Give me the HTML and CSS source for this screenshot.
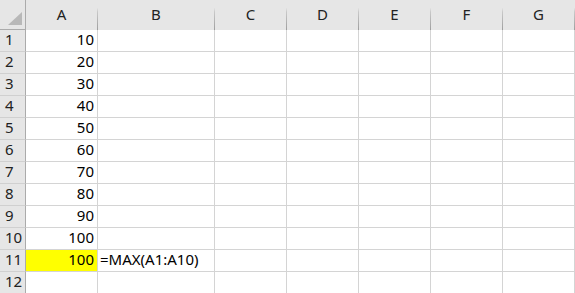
FILE: index.html
```html
<!DOCTYPE html>
<html lang="en">
<head>
    <meta charset="UTF-8">
    <title>Sheet</title>
    <link rel="stylesheet" href="styles.css">
</head>
<body>
    <div class="sheet">
        <div class="corner"><span class="corner-mark"></span></div>
        <div class="col-head">A</div>
        <div class="col-head">B</div>
        <div class="col-head">C</div>
        <div class="col-head">D</div>
        <div class="col-head">E</div>
        <div class="col-head">F</div>
        <div class="col-head">G</div>

        <div class="row-head">1</div><div class="cell num">10</div><div class="cell"></div><div class="cell"></div><div class="cell"></div><div class="cell"></div><div class="cell"></div><div class="cell"></div>
        <div class="row-head">2</div><div class="cell num">20</div><div class="cell"></div><div class="cell"></div><div class="cell"></div><div class="cell"></div><div class="cell"></div><div class="cell"></div>
        <div class="row-head">3</div><div class="cell num">30</div><div class="cell"></div><div class="cell"></div><div class="cell"></div><div class="cell"></div><div class="cell"></div><div class="cell"></div>
        <div class="row-head">4</div><div class="cell num">40</div><div class="cell"></div><div class="cell"></div><div class="cell"></div><div class="cell"></div><div class="cell"></div><div class="cell"></div>
        <div class="row-head">5</div><div class="cell num">50</div><div class="cell"></div><div class="cell"></div><div class="cell"></div><div class="cell"></div><div class="cell"></div><div class="cell"></div>
        <div class="row-head">6</div><div class="cell num">60</div><div class="cell"></div><div class="cell"></div><div class="cell"></div><div class="cell"></div><div class="cell"></div><div class="cell"></div>
        <div class="row-head">7</div><div class="cell num">70</div><div class="cell"></div><div class="cell"></div><div class="cell"></div><div class="cell"></div><div class="cell"></div><div class="cell"></div>
        <div class="row-head">8</div><div class="cell num">80</div><div class="cell"></div><div class="cell"></div><div class="cell"></div><div class="cell"></div><div class="cell"></div><div class="cell"></div>
        <div class="row-head">9</div><div class="cell num">90</div><div class="cell"></div><div class="cell"></div><div class="cell"></div><div class="cell"></div><div class="cell"></div><div class="cell"></div>
        <div class="row-head">10</div><div class="cell num">100</div><div class="cell"></div><div class="cell"></div><div class="cell"></div><div class="cell"></div><div class="cell"></div><div class="cell"></div>
        <div class="row-head">11</div><div class="cell num highlight">100</div><div class="cell formula">=MAX(A1:A10)</div><div class="cell"></div><div class="cell"></div><div class="cell"></div><div class="cell"></div><div class="cell"></div>
        <div class="row-head">12</div><div class="cell"></div><div class="cell"></div><div class="cell"></div><div class="cell"></div><div class="cell"></div><div class="cell"></div><div class="cell"></div>
    </div>
</body>
</html>
```

FILE: styles.css
```css
/* === SHEET GRID === */
html, body {
    margin: 0;
    padding: 0;
    overflow: hidden;
    background-color: #ffffff;
}

.sheet {
    display: grid;
    grid-template-columns: 26px 72px 117px 72px 72px 72px 72px 72px;
    grid-template-rows: 30px repeat(12, 22px);
    font-family: "Noto Sans", "Open Sans", sans-serif;
    font-size: 15px;
    color: #000;
}

.sheet > div {
    box-sizing: border-box;
    display: flex;
    align-items: flex-end;
    line-height: 1;
}

.corner {
    background-color: #e6e6e6;
    border-right: 1px solid #ababab;
    border-bottom: 1px solid #ababab;
    justify-content: flex-end;
    padding: 0 3px 4px 0;
}

.corner-mark {
    width: 0;
    height: 0;
    border-left: 14px solid transparent;
    border-bottom: 13px solid #b8b8b8;
}

.col-head {
    background-color: #e6e6e6;
    justify-content: center;
    padding-bottom: 7px;
    color: #222;
    border-bottom: 1px solid #ababab;
    border-right: 1px solid;
    border-image: linear-gradient(to bottom, #e6e6e6 25%, #c8c8c8 40%, #9e9e9e) 1;
    border-image-slice: 0 1 0 0;
    border-image-width: 0 1px 0 0;
}

.row-head {
    background-color: #e6e6e6;
    border-right: 1px solid #ababab;
    border-bottom: 1px solid #d0d0d0;
    padding: 0 0 4px 5px;
    color: #222;
}

.cell {
    background-color: #ffffff;
    border-right: 1px solid #d4d4d4;
    border-bottom: 1px solid #d4d4d4;
    padding: 0 3px 4px 3px;
}

.num {
    justify-content: flex-end;
}

.highlight {
    background-color: #ffff00;
}

.formula {
    overflow: visible;
    white-space: nowrap;
    padding-left: 2px;
}
```
